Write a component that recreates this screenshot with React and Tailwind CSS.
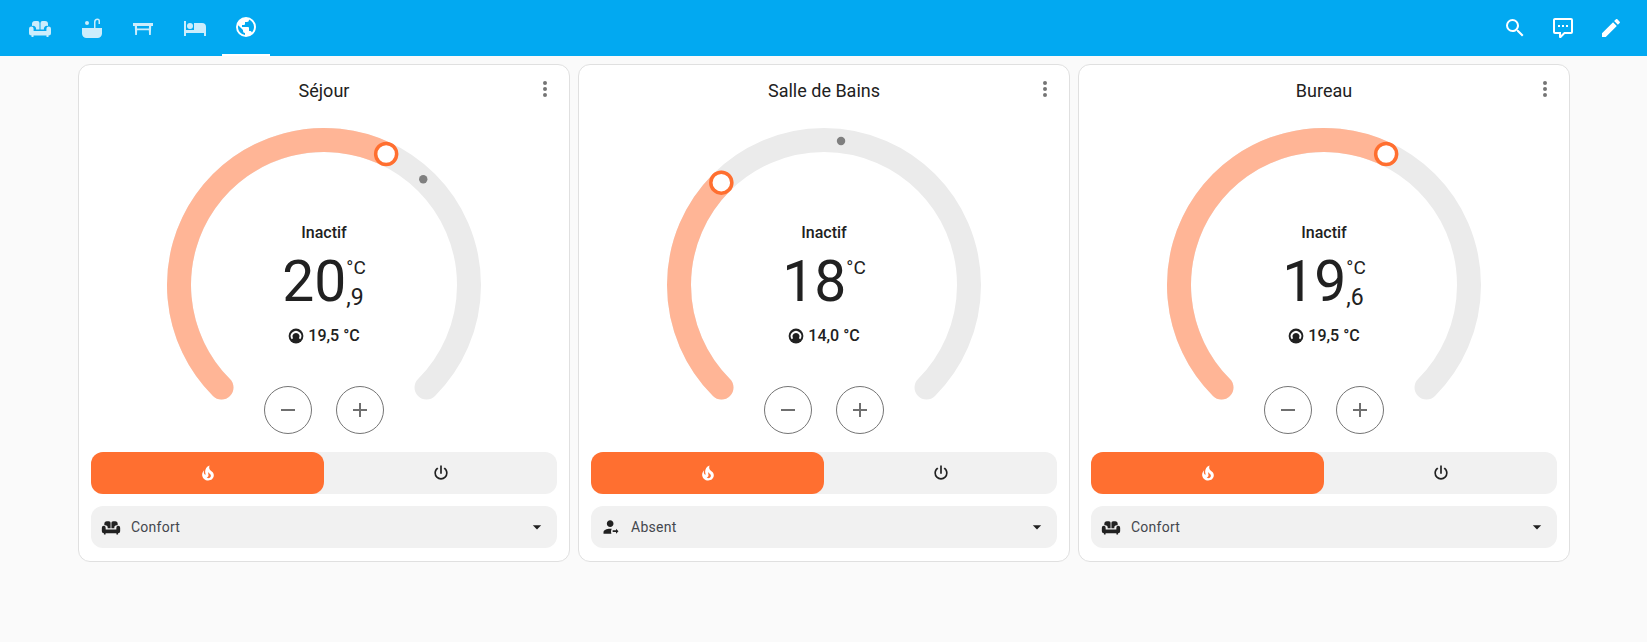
const mdi = {
  bed: 'M19,7H11V14H3V5H1V20H3V17H21V20H23V11A4,4 0 0,0 19,7M7,13A3,3 0 0,0 10,10A3,3 0 0,0 7,7A3,3 0 0,0 4,10A3,3 0 0,0 7,13Z',
  earth: 'M17.9,17.39C17.64,16.59 16.89,16 16,16H15V13A1,1 0 0,0 14,12H8V10H10A1,1 0 0,0 11,9V7H13A2,2 0 0,0 15,5V4.59C17.93,5.77 20,8.64 20,12C20,14.08 19.2,15.97 17.9,17.39M11,19.93C7.05,19.44 4,16.08 4,12C4,11.38 4.08,10.78 4.21,10.21L9,15V16A2,2 0 0,0 11,18M12,2A10,10 0 0,0 2,12A10,10 0 0,0 12,22A10,10 0 0,0 22,12A10,10 0 0,0 12,2Z',
  magnify: 'M9.5,3A6.5,6.5 0 0,1 16,9.5C16,11.11 15.41,12.59 14.44,13.73L14.71,14H15.5L20.5,19L19,20.5L14,15.5V14.71L13.73,14.44C12.59,15.41 11.11,16 9.5,16A6.5,6.5 0 0,1 3,9.5A6.5,6.5 0 0,1 9.5,3M9.5,5C7,5 5,7 5,9.5C5,12 7,14 9.5,14C12,14 14,12 14,9.5C14,7 12,5 9.5,5Z',
  comment: 'M9,22A1,1 0 0,1 8,21V18H4A2,2 0 0,1 2,16V4C2,2.89 2.9,2 4,2H20A2,2 0 0,1 22,4V16A2,2 0 0,1 20,18H13.9L10.2,21.71C10,21.9 9.75,22 9.5,22V22H9M10,16V19.08L13.08,16H20V4H4V16H10M17,11H15V9H17V11M13,11H11V9H13V11M9,11H7V9H9V11Z',
  pencil: 'M20.71,7.04C21.1,6.65 21.1,6 20.71,5.63L18.37,3.29C18,2.9 17.35,2.9 16.96,3.29L15.12,5.12L18.87,8.87M3,17.25V21H6.75L17.81,9.93L14.06,6.18L3,17.25Z',
  dots: 'M12,16A2,2 0 0,1 14,18A2,2 0 0,1 12,20A2,2 0 0,1 10,18A2,2 0 0,1 12,16M12,10A2,2 0 0,1 14,12A2,2 0 0,1 12,14A2,2 0 0,1 10,12A2,2 0 0,1 12,10M12,4A2,2 0 0,1 14,6A2,2 0 0,1 12,8A2,2 0 0,1 10,6A2,2 0 0,1 12,4Z',
  minus: 'M19,13H5V11H19V13Z',
  plus: 'M19,13H13V19H11V13H5V11H11V5H13V11H19V13Z',
  fire: 'M17.66 11.2C17.43 10.9 17.15 10.64 16.89 10.38C16.22 9.78 15.46 9.35 14.82 8.72C13.33 7.26 13 4.85 13.95 3C13 3.23 12.17 3.75 11.46 4.32C8.87 6.4 7.85 10.07 9.07 13.22C9.11 13.32 9.15 13.42 9.15 13.55C9.15 13.77 9 13.97 8.8 14.05C8.57 14.15 8.33 14.09 8.14 13.93C8.08 13.88 8.04 13.83 8 13.76C6.87 12.33 6.69 10.28 7.45 8.64C5.78 10 4.87 12.3 5 14.47C5.06 14.97 5.12 15.47 5.29 15.97C5.43 16.57 5.7 17.17 6 17.7C7.08 19.43 8.95 20.67 10.96 20.92C13.1 21.19 15.39 20.8 17.03 19.32C18.86 17.66 19.5 15 18.56 12.72L18.43 12.46C18.22 12 17.66 11.2 17.66 11.2M14.5 17.5C14.22 17.74 13.76 18 13.4 18.1C12.28 18.5 11.16 17.94 10.5 17.28C11.69 17 12.4 16.12 12.61 15.23C12.78 14.43 12.46 13.77 12.33 13C12.21 12.26 12.23 11.63 12.5 10.94C12.69 11.32 12.89 11.7 13.13 12C13.9 13 15.11 13.44 15.37 14.8C15.41 14.94 15.43 15.08 15.43 15.23C15.46 16.05 15.1 16.95 14.5 17.5H14.5Z',
  power: 'M16.56,5.44L15.11,6.89C16.84,7.94 18,9.83 18,12A6,6 0 0,1 12,18A6,6 0 0,1 6,12C6,9.83 7.16,7.94 8.88,6.88L7.44,5.44C5.36,6.88 4,9.28 4,12A8,8 0 0,0 12,20A8,8 0 0,0 20,12C20,9.28 18.64,6.88 16.56,5.44M13,3H11V13H13',
  menuDown: 'M7,10L12,15L17,10H7Z',
  absent: 'M18 16H14V18H18V20L21 17L18 14V16M11 4C8.8 4 7 5.8 7 8S8.8 12 11 12 15 10.2 15 8 13.2 4 11 4M11 14C6.6 14 3 15.8 3 18V20H12.5C12.2 19.2 12 18.4 12 17.5C12 16.3 12.3 15.2 12.9 14.1C12.3 14.1 11.7 14 11 14',
  sofa: 'M4 10V8a3 3 0 0 1 3-3h2.5a2 2 0 0 1 2 2v6.5H8A3 3 0 0 0 4 10ZM20 10V8a3 3 0 0 0-3-3h-2.5a2 2 0 0 0-2 2v6.5H16A3 3 0 0 1 20 10ZM3.3 10.5A2.3 2.3 0 0 0 1 12.8V17a2.5 2.5 0 0 0 2.5 2.5V21h2v-1.5h13V21h2v-1.5A2.5 2.5 0 0 0 23 17v-4.2a2.3 2.3 0 0 0-4.6 0V15H5.6v-2.2a2.3 2.3 0 0 0-2.3-2.3Z',
  bath: 'M2 12H22V17.5A4.5 4.5 0 0 1 17.5 22H6.5A4.5 4.5 0 0 1 2 17.5ZM7 5A2 2 0 1 1 7 9A2 2 0 1 1 7 5ZM14 12V6A3.5 3.5 0 0 1 17.5 2.5A2.5 2.5 0 0 1 20 5V8H18.5V5A1 1 0 0 0 17.5 4A2 2 0 0 0 15.5 6V12Z',
  table: 'M2 7H22V10H20.2L19.8 19H18.1L17.8 14.2H6.2L5.9 19H4.2L3.8 10H2ZM6 10L6.1 12.5H17.9L18 10Z',
};

function Icon({ path, size = 24, className = '' }) {
  return (
    <svg viewBox="0 0 24 24" width={size} height={size} className={className} fill="currentColor">
      <path d={path} />
    </svg>
  );
}

// little round thermostat glyph next to the target temperature
function TargetIcon() {
  return (
    <svg viewBox="0 0 16 16" width="16" height="16">
      <circle cx="8" cy="8" r="7.4" fill="#212121" />
      <path d="M3.6 11.2A5.3 5.3 0 1 1 12.4 11.2L10.9 10.2A3.4 3.4 0 1 0 5.1 10.2Z" fill="#fff" />
      <circle cx="8" cy="8" r="2" fill="#212121" />
    </svg>
  );
}

const cx = 160;
const cy = 160;
const r = 145;

function pointAt(v) {
  const a = ((135 + v * 270) * Math.PI) / 180;
  return [cx + r * Math.cos(a), cy + r * Math.sin(a)];
}

function arc(v) {
  const [x0, y0] = pointAt(0);
  const [x1, y1] = pointAt(v);
  return `M${x0} ${y0}A${r} ${r} 0 ${v * 270 > 180 ? 1 : 0} 1 ${x1} ${y1}`;
}

function Gauge({ value, target }) {
  const [hx, hy] = pointAt(value);
  const dot = target != null ? pointAt(target) : null;
  return (
    <svg viewBox="0 0 320 320" width="320" height="320" className="block">
      <path d={arc(1)} fill="none" stroke="#ebebeb" strokeWidth="24" strokeLinecap="round" />
      <path d={arc(value)} fill="none" stroke="#ffb596" strokeWidth="24" strokeLinecap="round" />
      {dot && <circle cx={dot[0]} cy={dot[1]} r="4.2" fill="#7f7f7f" />}
      <circle cx={hx} cy={hy} r="10.5" fill="#fff" stroke="#ff6f30" strokeWidth="3.5" />
    </svg>
  );
}

function Card({ title, whole, decimal, target, value, dot, preset, presetIcon }) {
  return (
    <div className="relative flex h-[498px] flex-col rounded-xl border border-[#e0e0e0] bg-white px-3">
      <div className="h-[60px] pt-[14px] text-center text-[18px] leading-6 text-[#212121]">{title}</div>
      <button className="absolute right-3 top-[12px] text-[#757575]">
        <Icon path={mdi.dots} />
      </button>

      <div className="relative mx-auto h-[320px] w-[320px]">
        <Gauge value={value} target={dot} />
        <div className="absolute inset-x-0 top-[98px] flex flex-col items-center text-[#212121]">
          <div className="text-base font-medium leading-5">Inactif</div>
          <div className="mt-[6px] flex h-[66px] items-start justify-center">
            <span className="text-[57px] leading-[66px]">{whole}</span>
            <div className="flex flex-col pt-[7px]">
              <span className="text-[19px] leading-6">°C</span>
              {decimal && <span className="mt-[5px] text-[23px] leading-[26px]">,{decimal}</span>}
            </div>
          </div>
          <div className="mt-[11px] flex items-center gap-1 text-base font-medium leading-5">
            <TargetIcon />
            <span>{target} °C</span>
          </div>
        </div>
        <div className="absolute inset-x-0 bottom-[11px] flex justify-center gap-6">
          <button className="flex h-12 w-12 items-center justify-center rounded-full border border-[#757575] text-[#6f6f6f]">
            <Icon path={mdi.minus} />
          </button>
          <button className="flex h-12 w-12 items-center justify-center rounded-full border border-[#757575] text-[#6f6f6f]">
            <Icon path={mdi.plus} />
          </button>
        </div>
      </div>

      <div className="mt-[7px] flex h-[42px] rounded-xl bg-[#f1f1f1]">
        <button className="flex flex-1 items-center justify-center rounded-xl bg-[#ff6f30] text-white">
          <Icon path={mdi.fire} size={20} />
        </button>
        <button className="flex flex-1 items-center justify-center text-[#212121]">
          <Icon path={mdi.power} size={20} />
        </button>
      </div>

      <div className="mt-3 flex h-[42px] items-center rounded-xl bg-[#f1f1f1] px-[10px] text-sm text-[#44474e]">
        <Icon path={presetIcon} size={20} className="text-[#212121]" />
        <span className="ml-[10px] flex-1 tracking-[0.25px]">{preset}</span>
        <Icon path={mdi.menuDown} size={20} className="text-[#212121]" />
      </div>
    </div>
  );
}

export default function App() {
  const tabs = [mdi.sofa, mdi.bath, mdi.table, mdi.bed];
  return (
    <div className="min-h-screen bg-[#fafafa] font-[Roboto,sans-serif]">
      <header className="flex h-14 items-center justify-between bg-[#02a9f1] text-white">
        <div className="flex h-full gap-[3.6px] pl-4">
          {tabs.map((p, i) => (
            <div key={i} className="flex h-full w-12 items-center justify-center opacity-80">
              <Icon path={p} />
            </div>
          ))}
          <div className="flex h-full w-12 items-center justify-center border-b-2 border-white">
            <Icon path={mdi.earth} />
          </div>
        </div>
        <div className="flex items-center pr-3">
          <div className="flex h-12 w-12 items-center justify-center"><Icon path={mdi.magnify} /></div>
          <div className="flex h-12 w-12 items-center justify-center"><Icon path={mdi.comment} /></div>
          <div className="flex h-12 w-12 items-center justify-center"><Icon path={mdi.pencil} /></div>
        </div>
      </header>
      <main className="ml-[78px] grid w-[1492px] grid-cols-3 gap-2 pt-2">
        <Card title="Séjour" whole="20" decimal="9" target="19,5" value={0.594} dot={0.66} preset="Confort" presetIcon={mdi.sofa} />
        <Card title="Salle de Bains" whole="18" target="14,0" value={0.333} dot={0.525} preset="Absent" presetIcon={mdi.absent} />
        <Card title="Bureau" whole="19" decimal="6" target="19,5" value={0.594} preset="Confort" presetIcon={mdi.sofa} />
      </main>
    </div>
  );
}
